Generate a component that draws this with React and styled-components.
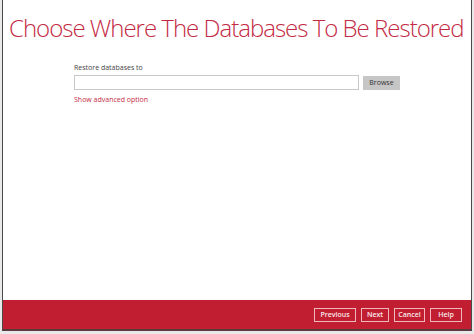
import styled, { createGlobalStyle } from 'styled-components'

const Global = createGlobalStyle`
  html, body {
    margin: 0;
    padding: 0;
    background: #e9e9e9;
  }
  #root {
    width: 474px;
    height: 334px;
  }
`

const Frame = styled.div`
  box-sizing: border-box;
  width: 470px;
  height: 331px;
  margin-left: 2px;
  background: #fff;
  border-left: 1px solid #4a4a4a;
  border-right: 1px solid #4a4a4a;
  border-bottom: 2px solid #5a3a3f;
  display: flex;
  flex-direction: column;
  font-family: "Open Sans", "Noto Sans", sans-serif;
`

const Title = styled.h1`
  margin: 12px 0 0 6px;
  font-size: 24px;
  font-weight: 350;
  letter-spacing: -1px;
  line-height: 32px;
  color: #c42a44;
  white-space: nowrap;
`

const Body = styled.div`
  flex: 1;
  padding: 19px 0 0 71px;
`

const Label = styled.div`
  font-size: 7px;
  line-height: 10px;
  color: #444;
`

const Row = styled.div`
  display: flex;
  align-items: center;
  gap: 4px;
  margin-top: 2px;
`

const Input = styled.div`
  box-sizing: border-box;
  width: 285px;
  height: 15px;
  border: 1px solid #c9c9c9;
  background: #fff;
`

const Browse = styled.div`
  box-sizing: border-box;
  width: 37px;
  height: 14px;
  background: #c6c6c6;
  color: #333;
  font-size: 7px;
  display: flex;
  align-items: center;
  justify-content: center;
`

const Advanced = styled.div`
  margin-top: 5px;
  font-size: 7px;
  color: #c42a44;
`

const Footer = styled.div`
  height: 29px;
  background: #c11f31;
  display: flex;
  justify-content: flex-end;
  align-items: center;
  gap: 5px;
  padding-right: 9px;
`

const Button = styled.div`
  box-sizing: border-box;
  width: ${p => p.w}px;
  height: 14px;
  border: 1.5px solid #f2b7bd;
  color: #fbe9eb;
  font-size: 7px;
  font-weight: 600;
  display: flex;
  align-items: center;
  justify-content: center;
`

const App = () => (
  <>
    <Global />
    <Frame>
      <Title>Choose Where The Databases To Be Restored</Title>
      <Body>
        <Label>Restore databases to</Label>
        <Row>
          <Input />
          <Browse>Browse</Browse>
        </Row>
        <Advanced>Show advanced option</Advanced>
      </Body>
      <Footer>
        <Button w={42}>Previous</Button>
        <Button w={28}>Next</Button>
        <Button w={31}>Cancel</Button>
        <Button w={32}>Help</Button>
      </Footer>
    </Frame>
  </>
)

export default App
